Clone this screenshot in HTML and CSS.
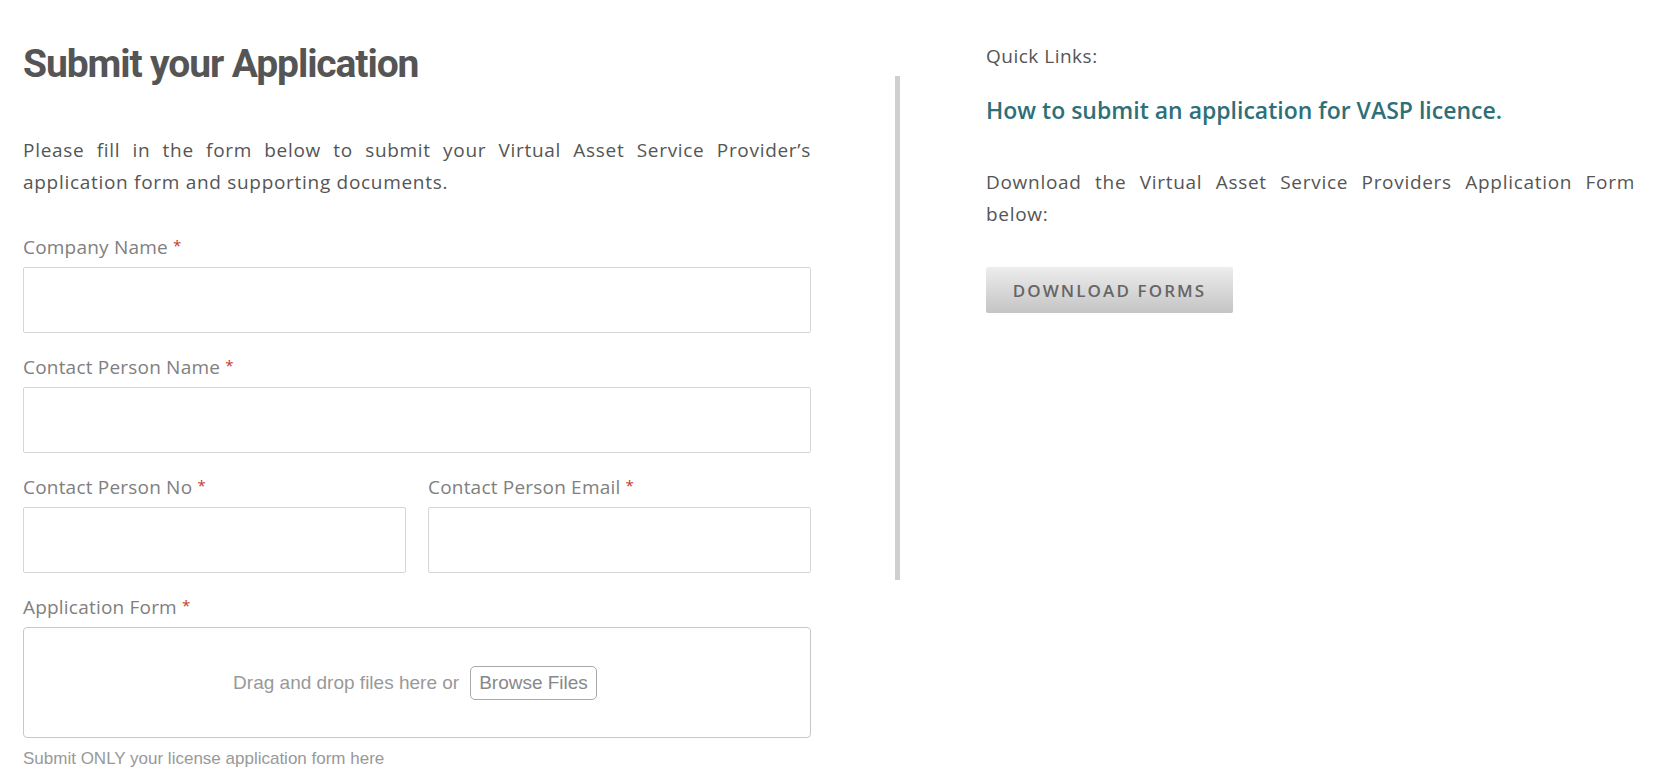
FILE: index.html
```html
<!DOCTYPE html>
<html lang="en">
<head>
    <meta charset="UTF-8">
    <meta name="viewport" content="width=device-width, initial-scale=1.0">
    <title>Submit your Application</title>
    <link rel="stylesheet" href="styles.css">
</head>
<body>
    <div class="page">
        <div class="form-col">
            <h1>Submit your Application</h1>
            <p class="intro">Please fill in the form below to submit your Virtual Asset Service Provider’s application form and supporting documents.</p>

            <div class="field">
                <label>Company Name <span class="req">*</span></label>
                <input type="text" class="text-input">
            </div>
            <div class="field">
                <label>Contact Person Name <span class="req">*</span></label>
                <input type="text" class="text-input">
            </div>
            <div class="field-row">
                <div class="field">
                    <label>Contact Person No <span class="req">*</span></label>
                    <input type="text" class="text-input">
                </div>
                <div class="field">
                    <label>Contact Person Email <span class="req">*</span></label>
                    <input type="text" class="text-input">
                </div>
            </div>
            <div class="field">
                <label>Application Form <span class="req">*</span></label>
                <div class="dropzone">
                    <span>Drag and drop files here or</span>
                    <button class="browse-btn">Browse Files</button>
                </div>
                <p class="help">Submit ONLY your license application form here</p>
            </div>
        </div>

        <div class="divider"></div>

        <div class="side">
            <p class="side-title">Quick Links:</p>
            <a class="side-link" href="#">How to submit an application for VASP licence.</a>
            <p class="side-text">Download the Virtual Asset Service Providers Application Form below:</p>
            <button class="download-btn">DOWNLOAD FORMS</button>
        </div>
    </div>
</body>
</html>
```

FILE: styles.css
```css
    body {
        margin: 0;
        padding: 0;
        background: #ffffff;
        font-family: 'Open Sans', sans-serif;
        color: #555555;
    }

    .page {
        display: flex;
        align-items: flex-start;
        padding: 40px 0 0 23px;
    }

    .form-col {
        width: 788px;
    }

    .form-col h1 {
        margin: 1px 0 0 0;
        font-family: Roboto, sans-serif;
        font-size: 39px;
        line-height: 46px;
        font-weight: 700;
        letter-spacing: -1.1px;
        color: #555555;
    }

    .intro {
        margin: 47px 0 37px 0;
        font-size: 19px;
        line-height: 32px;
        text-align: justify;
        letter-spacing: 0.7px;
        color: #555555;
    }

    .field {
        margin-bottom: 22px;
    }

    .field label {
        display: block;
        font-size: 19px;
        line-height: 24px;
        margin-bottom: 8px;
        color: #808080;
        letter-spacing: 0.2px;
    }

    .req {
        color: #c0392b;
        font-size: 15px;
        line-height: 0;
        vertical-align: 3px;
    }

    .text-input {
        display: block;
        box-sizing: border-box;
        width: 100%;
        height: 66px;
        border: 1px solid #d6d6d6;
        border-radius: 2px;
        outline: none;
        padding: 0 12px;
        font-size: 18px;
    }

    .field-row {
        display: flex;
        gap: 22px;
    }
    .field-row .field {
        flex: 1;
    }

    .dropzone {
        box-sizing: border-box;
        height: 111px;
        border: 1px solid #c8c8c8;
        border-radius: 4px;
        display: flex;
        justify-content: center;
        align-items: center;
        gap: 11px;
        padding-right: 4px;
        font-family: 'Liberation Sans', Arial, sans-serif;
        font-size: 19px;
        color: #999999;
    }

    .browse-btn {
        font-family: 'Liberation Sans', Arial, sans-serif;
        font-size: 19px;
        color: #888888;
        background: #ffffff;
        border: 1px solid #a8a8a8;
        border-radius: 5px;
        padding: 5px 8px;
    }

    .help {
        margin: 11px 0 0 0;
        font-family: 'Liberation Sans', Arial, sans-serif;
        font-size: 17px;
        line-height: 20px;
        color: #999999;
    }

    .divider {
        width: 5px;
        height: 504px;
        margin: 36px 86px 0 84px;
        background: #cfcfcf;
    }

    .side {
        width: 649px;
    }

    .side-title {
        margin: 0;
        font-size: 19px;
        line-height: 32px;
        letter-spacing: 0.5px;
        color: #555555;
    }

    .side-link {
        display: block;
        margin-top: 22px;
        font-size: 23px;
        line-height: 32px;
        font-weight: 600;
        color: #2e6f78;
        text-decoration: none;
    }

    .side-text {
        margin: 40px 0 37px 0;
        font-size: 19px;
        line-height: 32px;
        text-align: justify;
        letter-spacing: 0.7px;
        color: #555555;
    }

    .download-btn {
        display: block;
        height: 46px;
        width: 247px;
        border: none;
        border-radius: 2px;
        background: linear-gradient(#ededed, #c4c4c4);
        color: #666666;
        font-family: 'Open Sans', sans-serif;
        font-size: 17px;
        font-weight: 600;
        letter-spacing: 2.1px;
        cursor: pointer;
    }
```
